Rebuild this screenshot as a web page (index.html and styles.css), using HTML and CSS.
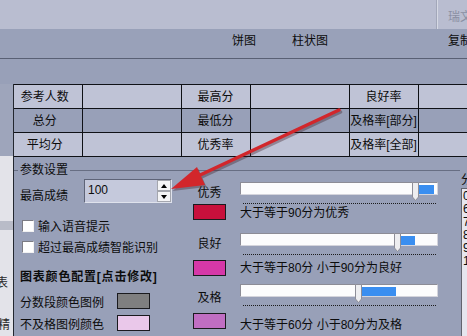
FILE: index.html
```html
<!DOCTYPE html>
<html lang="zh-CN">
<head>
  <meta charset="UTF-8">
  <title>成绩统计</title>
  <link rel="stylesheet" href="styles.css">
</head>
<body>
<div class="page">
  <div class="titlebar">
    <div class="who">瑞文网</div>
  </div>

  <div class="toolbar">
    <span class="tool">饼图</span>
    <span class="tool">柱状图</span>
    <span class="tool copy">复制</span>
  </div>

  <div class="work">
    <div class="side">
      <div class="side-top"></div>
      <div class="side-doc">
        <div class="band"></div>
        <div class="frag frag-a">表</div>
        <div class="frag frag-b">精</div>
      </div>
    </div>

    <div class="main">
      <table class="stats">
        <colgroup>
          <col class="c-key1"><col class="c-val"><col class="c-key"><col class="c-val"><col class="c-key"><col class="c-val">
        </colgroup>
        <tr class="light">
          <td>参考人数</td><td></td><td>最高分</td><td></td><td>良好率</td><td></td>
        </tr>
        <tr>
          <td>总分</td><td></td><td>最低分</td><td></td><td>及格率[部分]</td><td></td>
        </tr>
        <tr class="light">
          <td>平均分</td><td></td><td>优秀率</td><td></td><td>及格率[全部]</td><td></td>
        </tr>
      </table>

      <div class="settings">
        <fieldset class="params">
          <legend>参数设置</legend>
          <div class="cols">
            <div class="col-left">
              <div class="field">
                <span class="field-name">最高成绩</span>
                <div class="spin">
                  <span class="spin-value">100</span>
                  <span class="spin-btns">
                    <span class="spin-btn"><i class="tri-up"></i></span>
                    <span class="spin-btn"><i class="tri-down"></i></span>
                  </span>
                </div>
              </div>
              <label class="check"><span class="box"></span>输入语音提示</label>
              <label class="check"><span class="box"></span>超过最高成绩智能识别</label>
              <div class="chart-title">图表颜色配置[点击修改]</div>
              <div class="legend-row">
                <span>分数段颜色图例</span>
                <span class="swatch sw-grey"></span>
              </div>
              <div class="legend-row">
                <span>不及格图例颜色</span>
                <span class="swatch sw-pink"></span>
              </div>
            </div>

            <div class="col-tags">
              <span class="tag">优秀</span>
              <span class="swatch sw-red"></span>
              <span class="tag">良好</span>
              <span class="swatch sw-magenta"></span>
              <span class="tag">及格</span>
              <span class="swatch sw-violet"></span>
            </div>

            <div class="col-sliders">
              <div class="grade">
                <div class="slider">
                  <div class="track"></div>
                  <span class="range" style="left:179px;width:15px"></span>
                  <svg class="thumb" style="left:172px" width="7" height="19" viewBox="0 0 7 19"><path d="M0.5 0.5H6.5V15L3.5 18.5L0.5 15Z" fill="#ededf0" stroke="#8e8e98"/></svg>
                </div>
                <div class="ticks"></div>
                <div class="desc">大于等于90分为优秀</div>
              </div>
              <div class="grade">
                <div class="slider">
                  <div class="track"></div>
                  <span class="range" style="left:160px;width:15px"></span>
                  <svg class="thumb" style="left:154px" width="7" height="19" viewBox="0 0 7 19"><path d="M0.5 0.5H6.5V15L3.5 18.5L0.5 15Z" fill="#ededf0" stroke="#8e8e98"/></svg>
                </div>
                <div class="ticks"></div>
                <div class="desc">大于等于80分 小于90分为良好</div>
              </div>
              <div class="grade">
                <div class="slider">
                  <div class="track"></div>
                  <span class="range" style="left:122px;width:34px"></span>
                  <svg class="thumb" style="left:115px" width="7" height="19" viewBox="0 0 7 19"><path d="M0.5 0.5H6.5V15L3.5 18.5L0.5 15Z" fill="#ededf0" stroke="#8e8e98"/></svg>
                </div>
                <div class="ticks"></div>
                <div class="desc">大于等于60分 小于80分为及格</div>
              </div>
            </div>
          </div>
        </fieldset>

        <div class="dist">
          <div class="dist-title">分数段</div>
          <ul class="dist-list">
            <li>0-59</li>
            <li>60-69</li>
            <li>70-79</li>
            <li>80-89</li>
            <li>90-99</li>
            <li>100</li>
          </ul>
        </div>
      </div>
    </div>
  </div>

  <!-- annotation arrow drawn over the window -->
  <svg class="arrow" width="467" height="336" viewBox="0 0 467 336">
    <g fill="#3a1820" stroke="#3a1820" opacity="0.35" transform="translate(1.5 2)">
      <line x1="339" y1="110" x2="198" y2="176" stroke-width="3.5" stroke-linecap="round"/>
      <polygon points="171,189 197,167 205,185" stroke="none"/>
    </g>
    <line x1="339" y1="110" x2="198" y2="176" stroke="#d2262b" stroke-width="3.5" stroke-linecap="round"/>
    <polygon points="171,189 197,167 205,185" fill="#d2262b"/>
  </svg>
</div>
</body>
</html>
```

FILE: styles.css
```css
* { box-sizing: border-box; }

html, body { margin: 0; }

body {
  font-family: "Liberation Sans", "Noto Sans CJK SC", sans-serif;
  font-size: 12px;
  color: #0c0c0c;
  background: #98a0b8;
}

.page {
  position: relative;
  width: 467px;
  height: 336px;
  overflow: hidden;
}

/* top strips */
.titlebar {
  height: 29px;
  background: #b9bdd0;
  display: flex;
  justify-content: flex-end;
}

.who {
  width: 31px;
  padding: 9px 0 0 11px;
  line-height: 16px;
  border-left: 1px solid #a2a7b9;
  box-shadow: inset 1px 0 0 #d6d9e4;
  color: #8a8fa2;
  white-space: nowrap;
  overflow: hidden;
}

.toolbar {
  height: 30px;
  padding: 4px 0 0 232px;
  line-height: 16px;
  background: #99a1b9;
  border-bottom: 1px solid #596074;
  display: flex;
  white-space: nowrap;
}

.tool { flex: none; }
.tool + .tool { margin-left: 36px; }
.tool.copy { margin-left: 120px; }

/* work area */
.work {
  display: flex;
  height: 252px;
  margin-top: 25px;
}

.side {
  width: 13px;
  flex: none;
  display: flex;
  flex-direction: column;
}

.side-top {
  height: 72px;
  background: #9ea5bb;
}

.side-doc {
  flex: 1;
  background: #e3e3e9;
  overflow: hidden;
}

.band {
  margin-top: 65px;
  height: 9px;
  background: #b9bcc8;
}

.frag {
  line-height: 14px;
  color: #2a2a2a;
  white-space: nowrap;
}

.frag-a { margin: 46px 0 0 -4px; }
.frag-b { margin: 28px 0 0 -2px; }

.main {
  flex: 1;
  min-width: 0;
  border-left: 1px solid #23272f;
  overflow: hidden;
}

/* summary table */
.stats {
  border-collapse: collapse;
  table-layout: fixed;
  width: 503px;
}

.c-key1 { width: 68px; }
.c-key { width: 69px; }
.c-val { width: 99px; }

.stats td {
  height: 24px;
  padding: 0;
  border: 1px solid #0f1116;
  text-align: center;
  line-height: 14px;
  white-space: nowrap;
  overflow: hidden;
}

.stats td:first-child {
  border-left: 0;
  padding-right: 6px;
}

.stats .light td { background: #bfc3d6; }

/* settings group */
.settings {
  display: flex;
  margin-top: 6px;
}

.params {
  flex: none;
  width: 446px;
  min-width: 0;
  margin: 0;
  padding: 0 0 0 6px;
  border: 0;
  border-top: 1px solid #676e83;
}

.params legend {
  padding: 0 2px;
  margin-left: -2px;
  line-height: 14px;
}

.cols {
  display: flex;
  padding-top: 2px;
}

.col-left { width: 152px; flex: none; }

.field {
  display: flex;
  align-items: flex-end;
  gap: 16px;
}

.field-name {
  flex: none;
  line-height: 14px;
  white-space: nowrap;
}

.spin {
  flex: none;
  width: 88px;
  height: 24px;
  display: flex;
  justify-content: space-between;
  background: #c5c9dc;
  border: 1px solid;
  border-color: #5e6478 #dfe2ec #dfe2ec #5e6478;
}

.spin-value {
  padding: 3px 0 0 3px;
  line-height: 14px;
}

.spin-btns {
  width: 14px;
  display: flex;
  flex-direction: column;
}

.spin-btn {
  height: 11px;
  display: flex;
  align-items: center;
  justify-content: center;
  background: #f4f4f6;
  border: 1px solid #a4a6ae;
}

.tri-up, .tri-down {
  width: 0;
  height: 0;
  border-left: 3px solid transparent;
  border-right: 3px solid transparent;
}

.tri-up { border-bottom: 4px solid #000; }
.tri-down { border-top: 4px solid #000; }

.check {
  height: 21px;
  display: flex;
  align-items: center;
  gap: 4px;
  padding-left: 2px;
  white-space: nowrap;
}

.check:first-of-type { margin-top: 12px; }

.box {
  flex: none;
  width: 12px;
  height: 12px;
  background: #fff;
  border: 1px solid;
  border-color: #7c7c84 #f2f2f2 #f2f2f2 #7c7c84;
}

.chart-title {
  margin-top: 12px;
  line-height: 16px;
  font-weight: bold;
  letter-spacing: 0.8px;
  white-space: nowrap;
}

.legend-row {
  height: 16px;
  margin-top: 6px;
  display: flex;
  align-items: center;
  gap: 13px;
  white-space: nowrap;
}

.chart-title + .legend-row { margin-top: 8px; }

.swatch {
  flex: none;
  width: 33px;
  height: 16px;
  border: 1px solid #1a1a1e;
}

.sw-grey { background: #7f7f80; }
.sw-pink { background: #eac8ea; }
.sw-red { background: #c8103c; }
.sw-magenta { background: #d638a8; }
.sw-violet { background: #c06ec2; }

/* grade colours */
.col-tags {
  flex: none;
  width: 33px;
  margin-left: 21px;
  padding-top: 7px;
  display: flex;
  flex-direction: column;
  align-items: center;
}

.tag { line-height: 14px; white-space: nowrap; }

.col-tags > :nth-child(2) { margin-top: 4px; }
.col-tags > :nth-child(3) { margin-top: 17px; }
.col-tags > :nth-child(4) { margin-top: 9px; }
.col-tags > :nth-child(5) { margin-top: 15px; }
.col-tags > :nth-child(6) { margin-top: 8px; }

/* grade sliders */
.col-sliders {
  flex: none;
  width: 198px;
  margin-left: 14px;
}

.grade:nth-child(1) { margin-top: 3px; }
.grade:nth-child(2) { margin-top: 13px; }
.grade:nth-child(3) { margin-top: 9px; }

.grade:nth-child(1) .desc { margin-top: 2px; }
.grade:nth-child(2) .desc { margin-top: 6px; }
.grade:nth-child(3) .desc { margin-top: 12px; }

.slider {
  position: relative;
  height: 20px;
}

.track {
  margin-top: 1px;
  height: 13px;
  background: #fcfcfd;
  border: 1px solid;
  border-color: #8c8c96 #d4d4dc #d4d4dc #8c8c96;
}

.range {
  position: absolute;
  top: 3px;
  height: 9px;
  background: #3a8ef0;
}

.thumb {
  position: absolute;
  top: 0;
  display: block;
}

.ticks {
  margin: 1px 2px 0 3px;
  border-top: 1px dotted #1c1c1c;
}

.desc {
  line-height: 14px;
  white-space: nowrap;
}

/* score band list */
.dist {
  flex: 1;
  min-width: 0;
  margin-left: 1px;
  padding-top: 10px;
  white-space: nowrap;
  overflow: hidden;
}

.dist-title { line-height: 14px; }

.dist-list {
  list-style: none;
  margin: 1px 0 0;
  padding: 1px 0 0 1px;
  height: 200px;
  background: #e6e6ee;
  border: 1px solid;
  border-color: #62646e #f0f0f4 #f0f0f4 #62646e;
  border-right: 0;
}

.dist-list li { line-height: 13px; }

.arrow {
  position: absolute;
  left: 0;
  top: 0;
  pointer-events: none;
}
```
